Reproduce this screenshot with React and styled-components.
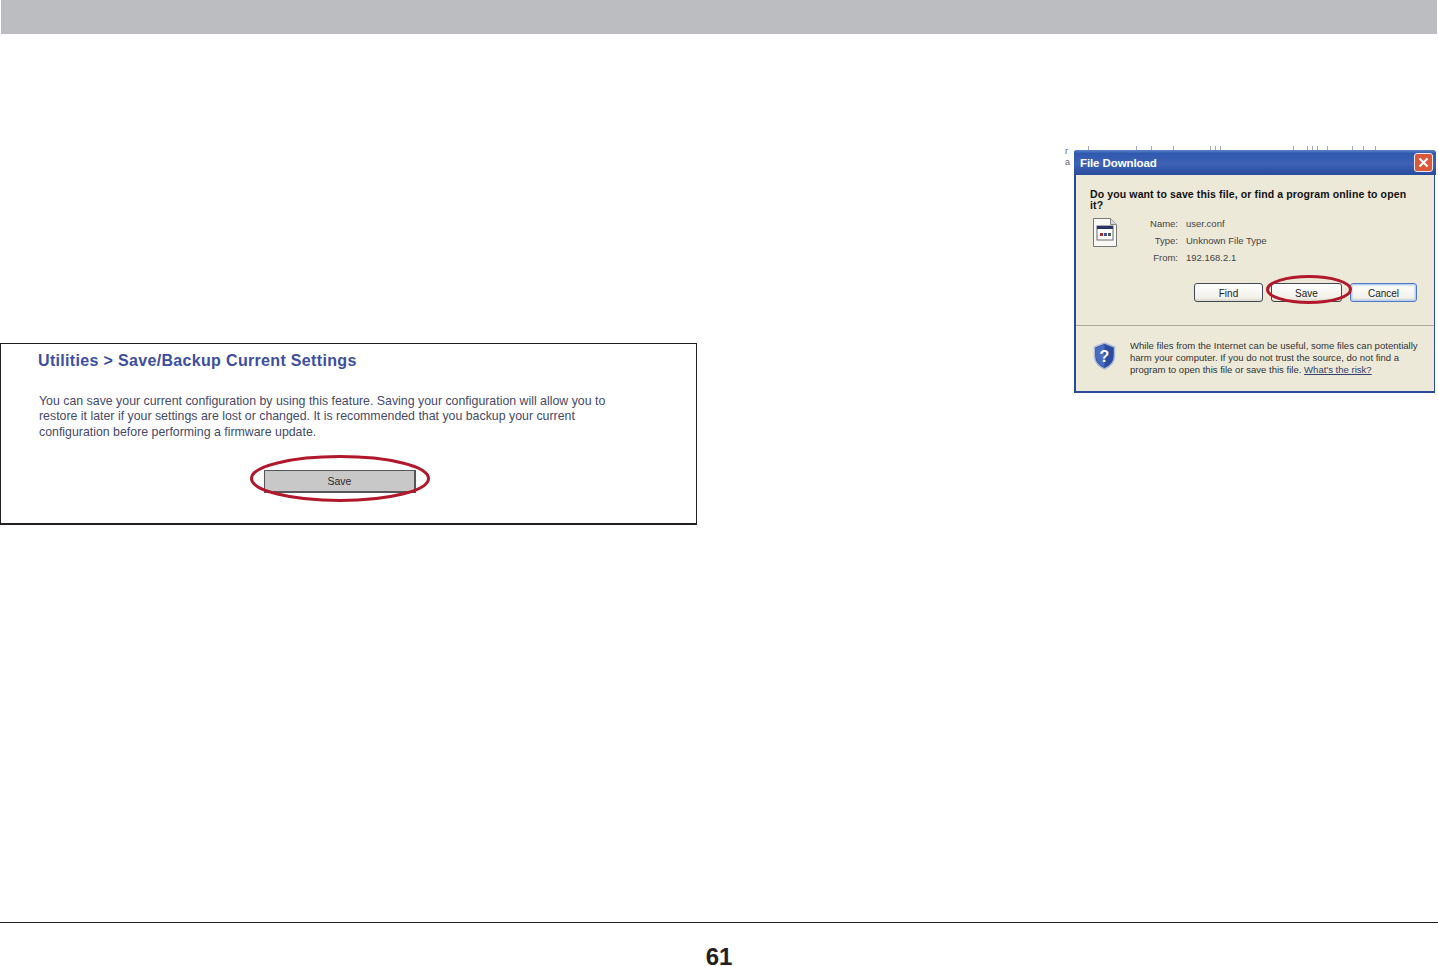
import React from 'react';
import styled, { createGlobalStyle } from 'styled-components';

const GlobalStyle = createGlobalStyle`
  html, body {
    margin: 0;
    padding: 0;
    background: #fff;
  }
`

const Page = styled.div`
  width: 1438px;
  height: 966px;
  display: flex;
  flex-direction: column;
  overflow: hidden;
  font-family: "Liberation Sans", Arial, sans-serif;
`

const TopBand = styled.div`
  height: 34px;
  margin: 0 1px;
  flex: none;
  background: #bcbdc0;
`

const Main = styled.main`
  flex: 1;
  display: flex;
  justify-content: space-between;
  align-items: flex-start;
`

const SettingsPanel = styled.section`
  box-sizing: border-box;
  width: 697px;
  height: 182px;
  margin-top: 309px;
  padding: 7px 36px 0 37px;
  border: 1.5px solid #231f20;
  border-bottom-width: 2px;
`

const PanelTitle = styled.h2`
  margin: 0;
  font-size: 16px;
  line-height: 19px;
  font-weight: 700;
  letter-spacing: 0.33px;
  color: #3d4ea3;
`

const PanelText = styled.p`
  width: 590px;
  margin: 24px 0 0 1px;
  font-size: 12.35px;
  line-height: 15.4px;
  color: #454a68;
`

const PanelAction = styled.div`
  display: flex;
  justify-content: center;
  margin: 30px 18px 0 0;
`

const Circled = styled.div`
  position: relative;
`

const Circle = styled.svg`
  position: absolute;
  left: ${(p) => p.$left}px;
  top: ${(p) => p.$top}px;
  pointer-events: none;
`

const GreyButton = styled.button`
  display: block;
  box-sizing: border-box;
  width: 152px;
  height: 23px;
  padding: 0;
  border: 1px solid #55565a;
  border-right-width: 2px;
  border-bottom-width: 2.5px;
  border-radius: 0;
  background: #c8c8c8;
  font-family: "Liberation Sans", Arial, sans-serif;
  font-size: 10.5px;
  color: #2a2a2a;
`

const DialogColumn = styled.div`
  width: 371px;
  margin: 116px 3px 0 0;
  position: relative;
  display: flex;
  justify-content: flex-end;
`

const BehindText = styled.div`
  position: absolute;
  left: 1px;
  top: -4px;
  font-size: 9px;
  line-height: 11px;
  color: #5f6478;
`

const BehindTicks = styled.svg`
  position: absolute;
  left: 0;
  top: -4px;
`

const Dialog = styled.section`
  box-sizing: border-box;
  position: relative;
  width: 361px;
  height: 243px;
  display: flex;
  flex-direction: column;
  border: solid #2a4b9b;
  border-width: 0 1.5px 2.5px 2px;
  border-radius: 3px 3px 0 0;
  background: #ece9d8;
`

const TitleBar = styled.header`
  flex: none;
  height: 25px;
  margin: 0 -1.5px 0 -2px;
  padding: 0 3px 0 6px;
  display: flex;
  align-items: center;
  justify-content: space-between;
  border-radius: 3px 3px 0 0;
  background: linear-gradient(#5b82c8, #3059ad 14%, #3d62b6 55%, #2d50a4 90%, #2a4b9b);
`

const DialogTitle = styled.span`
  font-size: 11.5px;
  font-weight: 700;
  letter-spacing: -0.1px;
  color: #fff;
`

const CloseButton = styled.span`
  width: 19px;
  height: 19px;
  box-sizing: border-box;
  display: flex;
  align-items: center;
  justify-content: center;
  border: 1px solid #e8e8f0;
  border-radius: 3px;
  background: #d9593a;
`

const DialogBody = styled.div`
  flex: 1;
  padding: 14px 14px 0 14px;
`

const Question = styled.p`
  margin: 0;
  font-size: 10.5px;
  line-height: 11px;
  font-weight: 700;
  letter-spacing: 0.12px;
  color: #111;
`

const FileRow = styled.div`
  display: flex;
  margin-top: 7px;
`

const FileIcon = styled.svg`
  flex: none;
  margin: 0 0 0 3px;
`

const FileFacts = styled.dl`
  margin: 0 0 0 33px;
  display: grid;
  grid-template-columns: 28px auto;
  column-gap: 8px;
  row-gap: 5px;
  font-size: 9.5px;
  line-height: 12px;
  color: #444;
`

const FactLabel = styled.dt`
  text-align: right;
`

const FactValue = styled.dd`
  margin: 0;
`

const ButtonRow = styled.div`
  display: flex;
  justify-content: flex-end;
  margin: 19px 3px 0 0;
  gap: 8px;
`

const XpButton = styled.button`
  display: block;
  box-sizing: border-box;
  width: ${(p) => p.$width}px;
  height: 19px;
  padding: 2px 0 0;
  border: 1px solid ${(p) => (p.$focused ? '#4f78c4' : '#3f4a55')};
  border-radius: 3px;
  background: linear-gradient(#fff, #f2f1ea 80%, #dcd9cb);
  box-shadow: ${(p) => (p.$focused ? 'inset 0 0 0 1.5px #b9d0f0' : 'none')};
  font-family: "Liberation Sans", Arial, sans-serif;
  font-size: 10px;
  color: #222;
`

const DialogFooter = styled.footer`
  flex: none;
  height: 66px;
  box-sizing: border-box;
  padding: 14px 14px 0 17px;
  display: flex;
  gap: 14px;
  border-top: 1px solid #a9a89c;
`

const ShieldIcon = styled.svg`
  flex: none;
  margin-top: 2px;
`

const FooterText = styled.p`
  margin: 0;
  white-space: nowrap;
  font-size: 9.55px;
  line-height: 12px;
  color: #333;
`

const RiskLink = styled.span`
  color: #34406f;
  text-decoration: underline;
`

const PageFooter = styled.footer`
  flex: none;
  height: 44px;
  box-sizing: border-box;
  padding-top: 24px;
  border-top: 1px solid #231f20;
  text-align: center;
  font-size: 24px;
  line-height: 19px;
  font-weight: 700;
  color: #231f20;
`

const RedEllipse = ({ width, height, left, top, stroke = 3 }) => (
    <Circle $left={left} $top={top} width={width} height={height}>
        <ellipse
            cx={width / 2}
            cy={height / 2}
            rx={width / 2 - stroke / 2}
            ry={height / 2 - stroke / 2}
            fill="none"
            stroke="#b2182b"
            strokeWidth={stroke}
        />
    </Circle>
);

// bits of the page text that stick out above the dialog
const tickPositions = [24, 72, 87, 109, 146, 151, 156, 229, 243, 248, 253, 263, 288, 299, 311];

const App = () => {
    return (
        <Page>
            <GlobalStyle />
            <TopBand />
            <Main>
                <SettingsPanel>
                    <PanelTitle>Utilities &gt; Save/Backup Current Settings</PanelTitle>
                    <PanelText>
                        You can save your current configuration by using this feature. Saving your
                        configuration will allow you to restore it later if your settings are lost or
                        changed. It is recommended that you backup your current configuration before
                        performing a firmware update.
                    </PanelText>
                    <PanelAction>
                        <Circled>
                            <GreyButton>Save</GreyButton>
                            <RedEllipse width={180} height={47} left={-14} top={-15} />
                        </Circled>
                    </PanelAction>
                </SettingsPanel>

                <DialogColumn>
                    <BehindText>r<br />a</BehindText>
                    <BehindTicks width="330" height="4">
                        {tickPositions.map((x) => (
                            <rect key={x} x={x} y="0" width="1" height="4" fill="#a0a6bc" />
                        ))}
                    </BehindTicks>
                    <Dialog>
                        <TitleBar>
                            <DialogTitle>File Download</DialogTitle>
                            <CloseButton>
                                <svg width="11" height="11" viewBox="0 0 11 11">
                                    <path d="M1.5 1.5l8 8M9.5 1.5l-8 8" stroke="#fff" strokeWidth="2" />
                                </svg>
                            </CloseButton>
                        </TitleBar>
                        <DialogBody>
                            <Question>
                                Do you want to save this file, or find a program online to open it?
                            </Question>
                            <FileRow>
                                <FileIcon width="24" height="29" viewBox="0 0 24 29">
                                    <path d="M.5.5h17l6 6v22H.5z" fill="#f8f8f4" stroke="#777" />
                                    <path d="M17.5.5v6h6" fill="#d8d8d8" stroke="#888" />
                                    <rect x="4" y="8" width="16" height="14" fill="#fff" stroke="#666" />
                                    <rect x="4" y="8" width="16" height="3" fill="#2a3566" />
                                    <rect x="7" y="15" width="3" height="3" fill="#b22" />
                                    <rect x="11" y="15" width="3" height="3" fill="#35a" />
                                    <rect x="15" y="15" width="3" height="3" fill="#555" />
                                </FileIcon>
                                <FileFacts>
                                    <FactLabel>Name:</FactLabel>
                                    <FactValue>user.conf</FactValue>
                                    <FactLabel>Type:</FactLabel>
                                    <FactValue>Unknown File Type</FactValue>
                                    <FactLabel>From:</FactLabel>
                                    <FactValue>192.168.2.1</FactValue>
                                </FileFacts>
                            </FileRow>
                            <ButtonRow>
                                <XpButton $width={69}>Find</XpButton>
                                <Circled>
                                    <XpButton $width={71}>Save</XpButton>
                                    <RedEllipse width={86} height={29} left={-5} top={-8} />
                                </Circled>
                                <XpButton $width={67} $focused>Cancel</XpButton>
                            </ButtonRow>
                        </DialogBody>
                        <DialogFooter>
                            <ShieldIcon width="23" height="28" viewBox="0 0 23 28">
                                <path d="M11.5 1l10 4v9c0 6-4.500 10.500-10 13C6 24.500 1.500 20 1.500 14V5z" fill="#2c4a9e" stroke="#a9bbd8" strokeWidth="1.5" />
                                <path d="M11.500 2.500v23C7 23 3 19.500 3 14V6z" fill="#4a6cc0" />
                                <text x="11.500" y="20" textAnchor="middle" fontFamily="Liberation Sans" fontWeight="700" fontSize="16" fill="#fff">?</text>
                            </ShieldIcon>
                            <FooterText>
                                While files from the Internet can be useful, some files can potentially<br />
                                harm your computer. If you do not trust the source, do not find a<br />
                                program to open this file or save this file. <RiskLink>What's the risk?</RiskLink>
                            </FooterText>
                        </DialogFooter>
                    </Dialog>
                </DialogColumn>
            </Main>
            <PageFooter>61</PageFooter>
        </Page>
    );
};

export default App;
